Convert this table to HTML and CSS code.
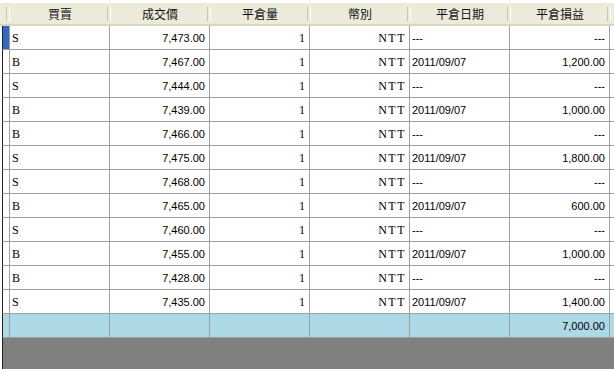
FILE: index.html
```html
<!DOCTYPE html>
<html lang="zh-Hant">
<head>
<meta charset="utf-8">
<title>平倉明細</title>
<link rel="stylesheet" href="styles.css">
</head>
<body>
<div class="grid">
  <div class="row head">
    <div class="rh"></div>
    <div class="hc">買賣</div>
    <div class="hc">成交價</div>
    <div class="hc">平倉量</div>
    <div class="hc">幣別</div>
    <div class="hc">平倉日期</div>
    <div class="hc">平倉損益</div>
    <div class="hc end"></div>
  </div>
  <div class="row sel"><div class="rh"><span class="mark"></span></div><div class="c l s">S</div><div class="c r">7,473.00</div><div class="c r s">1</div><div class="c r m">NTT</div><div class="c l">---</div><div class="c r">---</div><div class="c end"></div></div>
  <div class="row"><div class="rh"></div><div class="c l s">B</div><div class="c r">7,467.00</div><div class="c r s">1</div><div class="c r m">NTT</div><div class="c l">2011/09/07</div><div class="c r">1,200.00</div><div class="c end"></div></div>
  <div class="row"><div class="rh"></div><div class="c l s">S</div><div class="c r">7,444.00</div><div class="c r s">1</div><div class="c r m">NTT</div><div class="c l">---</div><div class="c r">---</div><div class="c end"></div></div>
  <div class="row"><div class="rh"></div><div class="c l s">B</div><div class="c r">7,439.00</div><div class="c r s">1</div><div class="c r m">NTT</div><div class="c l">2011/09/07</div><div class="c r">1,000.00</div><div class="c end"></div></div>
  <div class="row"><div class="rh"></div><div class="c l s">B</div><div class="c r">7,466.00</div><div class="c r s">1</div><div class="c r m">NTT</div><div class="c l">---</div><div class="c r">---</div><div class="c end"></div></div>
  <div class="row"><div class="rh"></div><div class="c l s">S</div><div class="c r">7,475.00</div><div class="c r s">1</div><div class="c r m">NTT</div><div class="c l">2011/09/07</div><div class="c r">1,800.00</div><div class="c end"></div></div>
  <div class="row"><div class="rh"></div><div class="c l s">S</div><div class="c r">7,468.00</div><div class="c r s">1</div><div class="c r m">NTT</div><div class="c l">---</div><div class="c r">---</div><div class="c end"></div></div>
  <div class="row"><div class="rh"></div><div class="c l s">B</div><div class="c r">7,465.00</div><div class="c r s">1</div><div class="c r m">NTT</div><div class="c l">2011/09/07</div><div class="c r">600.00</div><div class="c end"></div></div>
  <div class="row"><div class="rh"></div><div class="c l s">S</div><div class="c r">7,460.00</div><div class="c r s">1</div><div class="c r m">NTT</div><div class="c l">---</div><div class="c r">---</div><div class="c end"></div></div>
  <div class="row"><div class="rh"></div><div class="c l s">B</div><div class="c r">7,455.00</div><div class="c r s">1</div><div class="c r m">NTT</div><div class="c l">2011/09/07</div><div class="c r">1,000.00</div><div class="c end"></div></div>
  <div class="row"><div class="rh"></div><div class="c l s">B</div><div class="c r">7,428.00</div><div class="c r s">1</div><div class="c r m">NTT</div><div class="c l">---</div><div class="c r">---</div><div class="c end"></div></div>
  <div class="row"><div class="rh"></div><div class="c l s">S</div><div class="c r">7,435.00</div><div class="c r s">1</div><div class="c r m">NTT</div><div class="c l">2011/09/07</div><div class="c r">1,400.00</div><div class="c end"></div></div>
  <div class="row total"><div class="rh"></div><div class="c"></div><div class="c"></div><div class="c"></div><div class="c"></div><div class="c"></div><div class="c r">7,000.00</div><div class="c end"></div></div>
  <div class="empty"></div>
</div>
</body>
</html>
```
FILE: styles.css
```css
* { box-sizing: border-box; }
html, body {
  margin: 0;
  padding: 0;
  width: 614px;
  height: 369px;
  overflow: hidden;
  background: #ffffff;
}
body {
  font-family: "Liberation Sans", Arial, sans-serif;
  font-size: 11px;
  color: #000;
}
.grid {
  display: flex;
  flex-direction: column;
  height: 369px;
  border-left: 2px solid #ffffff;
}
.row {
  display: grid;
  grid-template-columns: 8px repeat(6, 100px) 4px;
  height: 24px;
  flex: none;
}
.row .rh {
  border-left: 1px solid #202020;
  border-right: 1px solid #a0a0a0;
  border-bottom: 1px solid #a0a0a0;
  position: relative;
  background: #fff;
}
.mark {
  position: absolute;
  left: 0;
  top: 0;
  bottom: 0;
  width: 6px;
  background: #316ac5;
}
.c {
  border-right: 1px solid #a0a0a0;
  border-bottom: 1px solid #a0a0a0;
  line-height: 24px;
  white-space: nowrap;
  overflow: hidden;
}
.c.end { border-right: none; }
.c.l { padding-left: 2px; }
.c.s {
  font-family: "Liberation Serif", "Times New Roman", serif;
  font-size: 12px;
}
.c.r { text-align: right; padding-right: 4px; }
.c.m {
  font-family: "Liberation Serif", "Times New Roman", serif;
  font-size: 12px;
  letter-spacing: 1.5px;
  padding-right: 3px;
}
.head {
  height: 26px;
  background: #ebeadb;
  border-top: 3px solid #ffffff;
  border-bottom: 2px solid #d8d5c5;
  grid-template-columns: 10px repeat(6, 100px) 4px;
  margin-left: -2px;
}
.head .rh {
  border: none;
  background: transparent;
  position: relative;
}
.hc {
  position: relative;
  text-align: center;
  font-family: "Noto Sans CJK TC", "Noto Sans CJK SC", sans-serif;
  font-size: 12px;
  line-height: 21px;
  color: #111;
}
.head .rh::after,
.hc::after {
  content: "";
  position: absolute;
  right: 0;
  top: 4px;
  bottom: 3px;
  width: 2px;
  border-left: 1px solid #c7c5b2;
  border-right: 1px solid #ffffff;
}
.hc.end::after { display: none; }
.head .rh::after { right: 0; }
.hc::after { right: -1px; }
.total .rh,
.total .c {
  background: #add8e6;
}
.empty {
  flex: 1;
  background: #808080;
  border-left: 1px solid #202020;
}
```
